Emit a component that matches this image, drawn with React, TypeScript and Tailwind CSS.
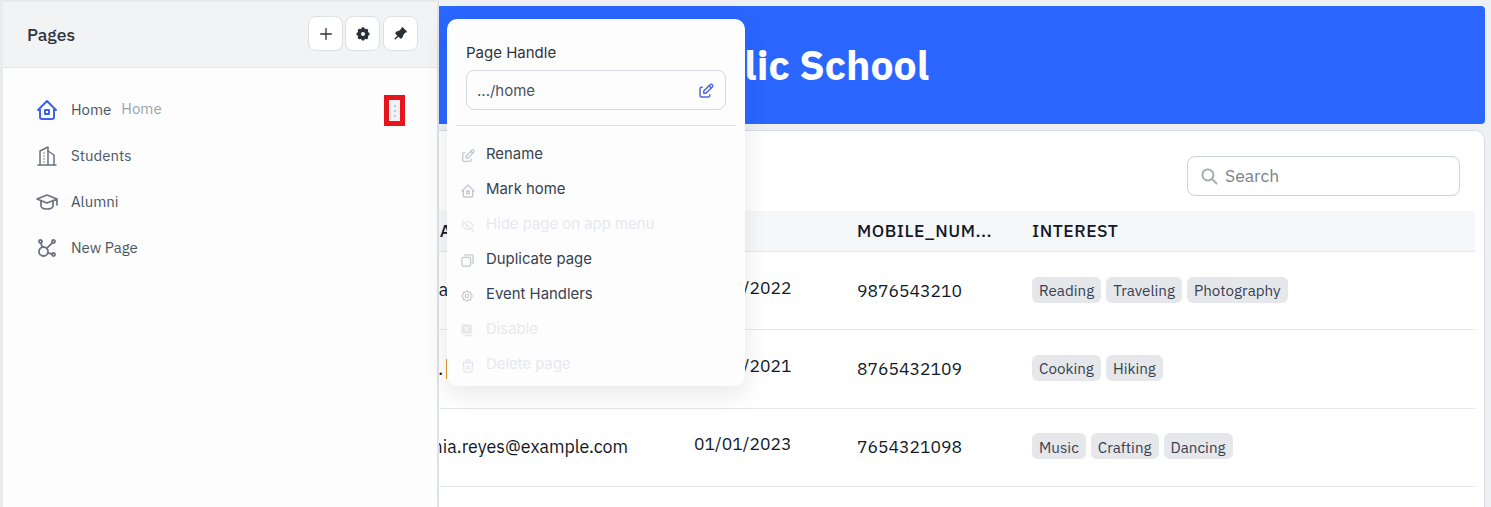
import React from 'react'
import {
  TbAffiliate,
  TbBuildingSkyscraper,
  TbCopy,
  TbEdit,
  TbEyeOff,
  TbHome2,
  TbPinFilled,
  TbPlus,
  TbSchool,
  TbSearch,
  TbSettings,
  TbSettingsFilled,
  TbTrashX,
} from 'react-icons/tb'

const rows = [
  { email: 'reya', caret: false, date: '01/01/2022', mobile: '9876543210', tags: ['Reading', 'Traveling', 'Photography'] },
  { email: 'leo.', caret: true, date: '01/01/2021', mobile: '8765432109', tags: ['Cooking', 'Hiking'] },
  { email: 'sonia.reyes@example.com', caret: false, date: '01/01/2023', mobile: '7654321098', tags: ['Music', 'Crafting', 'Dancing'] },
]

function DisableGlyph() {
  return (
    <svg viewBox="0 0 16 16" className="h-[15px] w-[15px]" fill="currentColor">
      <path d="M2.5 1.5h9a1 1 0 0 1 1 1v8a1 1 0 0 1-1 1h-9a1 1 0 0 1-1-1v-8a1 1 0 0 1 1-1Z" />
      <path d="M5.2 4.2 8.8 8M8.8 4.2 5.2 8" stroke="#fdfdfe" strokeWidth="1.2" fill="none" />
      <path d="M3.5 13.5H14" stroke="currentColor" strokeWidth="1.4" fill="none" />
    </svg>
  )
}

function NavItem({ icon, label, extra }: { icon: React.ReactNode; label: string; extra?: string }) {
  return (
    <div className="flex h-[46px] items-center pl-[32px]">
      <span className="flex w-[36px] shrink-0">{icon}</span>
      <span className="text-[15px] text-[#4b5563]">{label}</span>
      {extra && <span className="ml-[10px] -translate-y-px text-[15px] text-[#9ca3af]">{extra}</span>}
    </div>
  )
}

function MenuItem({ icon, label, disabled }: { icon: React.ReactNode; label: string; disabled?: boolean }) {
  return (
    <div className="flex h-[35px] items-center pl-[13px]">
      <span className={`flex w-[26px] shrink-0 translate-y-px ${disabled ? 'text-[#e5e7eb]' : 'text-[#c4c8ce]'}`}>{icon}</span>
      <span className={`text-[14.9px] ${disabled ? 'text-[#e7e9ec]' : 'text-[#374151]'}`}>{label}</span>
    </div>
  )
}

export default function App() {
  return (
    <div className="relative h-[507px] w-[1491px] overflow-hidden bg-[#eef0f4] font-['IBM_Plex_Sans','Noto_Sans',sans-serif]">
      {/* page behind the drawer */}
      <main className="flex flex-col pt-[6px] pr-[6px]">
        <div className="flex h-[118px] shrink-0 items-center rounded-[4px] bg-[#2a66ff] pl-[668px] text-[41px] font-bold text-white">
          Public School
        </div>
        <section className="mt-[6px] h-[420px] rounded-[10px] border border-[#d9dde3] bg-white pt-[25px] pr-[9px]">
          <div className="flex justify-end pr-[15px]">
            <div className="flex h-[40px] w-[273px] items-center rounded-[8px] border border-[#ced2d9] pl-[12px]">
              <TbSearch className="h-[19px] w-[19px] text-[#a3a8b0]" strokeWidth={2.4} />
              <span className="ml-[6px] text-[17.5px] text-[#7b828d]">Search</span>
            </div>
          </div>
          <div className="mt-[15px] grid h-[41px] grid-cols-[413px_280px_163px_175px_1fr] items-center border-b border-[#e5e7eb] bg-[#f6f7f9] text-[17.5px] font-medium tracking-[0.5px] text-[#111827]">
            <span />
            <span>EMAIL</span>
            <span>DATE</span>
            <span>MOBILE_NUM...</span>
            <span>INTEREST</span>
          </div>
          {rows.map((row) => (
            <div key={row.mobile} className="grid h-[78.4px] grid-cols-[413px_280px_163px_175px_1fr] items-center border-b border-[#e5e7eb] text-[17.5px] text-[#111827]">
              <span />
              <span className="flex items-center text-[17.8px]">
                {row.email}
                {row.caret && <i className="ml-[3px] block h-[20px] w-px bg-[#e8952e]" />}
              </span>
              <span className="-translate-y-[3px]">{row.date}</span>
              <span>{row.mobile}</span>
              <div className="flex -translate-y-px gap-[5px]">
                {row.tags.map((tag) => (
                  <span key={tag} className="flex h-[26px] items-center rounded-[6px] bg-[#e5e7eb] px-[7px] pt-px text-[15.2px] text-[#374151]">
                    {tag}
                  </span>
                ))}
              </div>
            </div>
          ))}
        </section>
      </main>

      {/* pages drawer */}
      <aside className="absolute top-0 bottom-0 left-0 w-[439px] border-t-2 border-r-2 border-l-[3px] border-t-[#e7e9ec] border-r-[#dfe2e6] border-l-[#e9ebee] bg-[#fdfdfe]">
        <header className="flex h-[66px] items-center justify-between border-b border-[#e5e7eb] bg-[#f2f3f5] pr-[19px] pl-[24px]">
          <h2 className="translate-y-px text-[17.5px] font-medium text-[#2f343a]">Pages</h2>
          <div className="flex -translate-y-px gap-[2px]">
            <button className="flex h-[35px] w-[35px] items-center justify-center rounded-[8px] border border-[#dcdfe4] bg-white">
              <TbPlus className="h-[18px] w-[18px] text-[#2b3036]" strokeWidth={1.8} />
            </button>
            <button className="flex h-[35px] w-[35px] items-center justify-center rounded-[8px] border border-[#dcdfe4] bg-white">
              <TbSettingsFilled className="h-[16px] w-[16px] text-[#2b3036]" />
            </button>
            <button className="ml-px flex h-[35px] w-[35px] items-center justify-center rounded-[8px] border border-[#dcdfe4] bg-white">
              <TbPinFilled className="h-[17px] w-[17px] text-[#2b3036]" />
            </button>
          </div>
        </header>
        <nav className="relative pt-[19px]">
          <NavItem icon={<TbHome2 className="h-[24px] w-[24px] text-[#3e63e6]" strokeWidth={2} />} label="Home" extra="Home" />
          <NavItem icon={<TbBuildingSkyscraper className="h-[24px] w-[24px] text-[#6b7280]" strokeWidth={1.5} />} label="Students" />
          <NavItem icon={<TbSchool className="h-[24px] w-[24px] text-[#6b7280]" strokeWidth={1.7} />} label="Alumni" />
          <NavItem icon={<TbAffiliate className="h-[24px] w-[24px] text-[#6b7280]" strokeWidth={1.8} />} label="New Page" />
          <div className="absolute top-[27px] left-[381px] flex h-[31px] w-[21px] items-center justify-center border-[5px] border-[#e8141c] bg-[#f1f2f4]">
            <div className="flex flex-col gap-[3px]">
              <i className="block h-[2px] w-[2px] rounded-full bg-[#b6bbc2]" />
              <i className="block h-[2px] w-[2px] rounded-full bg-[#b6bbc2]" />
              <i className="block h-[2px] w-[2px] rounded-full bg-[#b6bbc2]" />
            </div>
          </div>
        </nav>
      </aside>

      {/* page actions popover */}
      <div className="absolute top-[19px] left-[447px] h-[367px] w-[298px] rounded-[10px] bg-[#fdfdfe] font-['Inter',sans-serif] shadow-[0_8px_24px_rgba(17,24,39,0.10)]">
        <div className="px-[19px] pt-[24px]">
          <label className="block text-[15px] leading-[20px] text-[#2f343a]">Page Handle</label>
          <div className="mt-[7px] flex h-[40px] w-[260px] items-center justify-between rounded-[8px] border border-[#d5d8de] px-[10px] pt-[2px]">
            <span className="text-[15px] text-[#4b5563]">.../home</span>
            <TbEdit className="h-[18px] w-[18px] text-[#4f6bdc]" strokeWidth={2} />
          </div>
        </div>
        <div className="mx-[9px] mt-[15px] border-t border-[#dcdfe4]" />
        <div className="pt-[11px]">
          <MenuItem icon={<TbEdit className="h-[16px] w-[16px]" />} label="Rename" />
          <MenuItem icon={<TbHome2 className="h-[16px] w-[16px]" />} label="Mark home" />
          <MenuItem icon={<TbEyeOff className="h-[15px] w-[15px]" />} label="Hide page on app menu" disabled />
          <MenuItem icon={<TbCopy className="h-[15px] w-[15px] -scale-x-100" />} label="Duplicate page" />
          <MenuItem icon={<TbSettings className="h-[14px] w-[14px]" />} label="Event Handlers" />
          <MenuItem icon={<DisableGlyph />} label="Disable" disabled />
          <MenuItem icon={<TbTrashX className="h-[16px] w-[16px]" />} label="Delete page" disabled />
        </div>
      </div>
    </div>
  )
}
